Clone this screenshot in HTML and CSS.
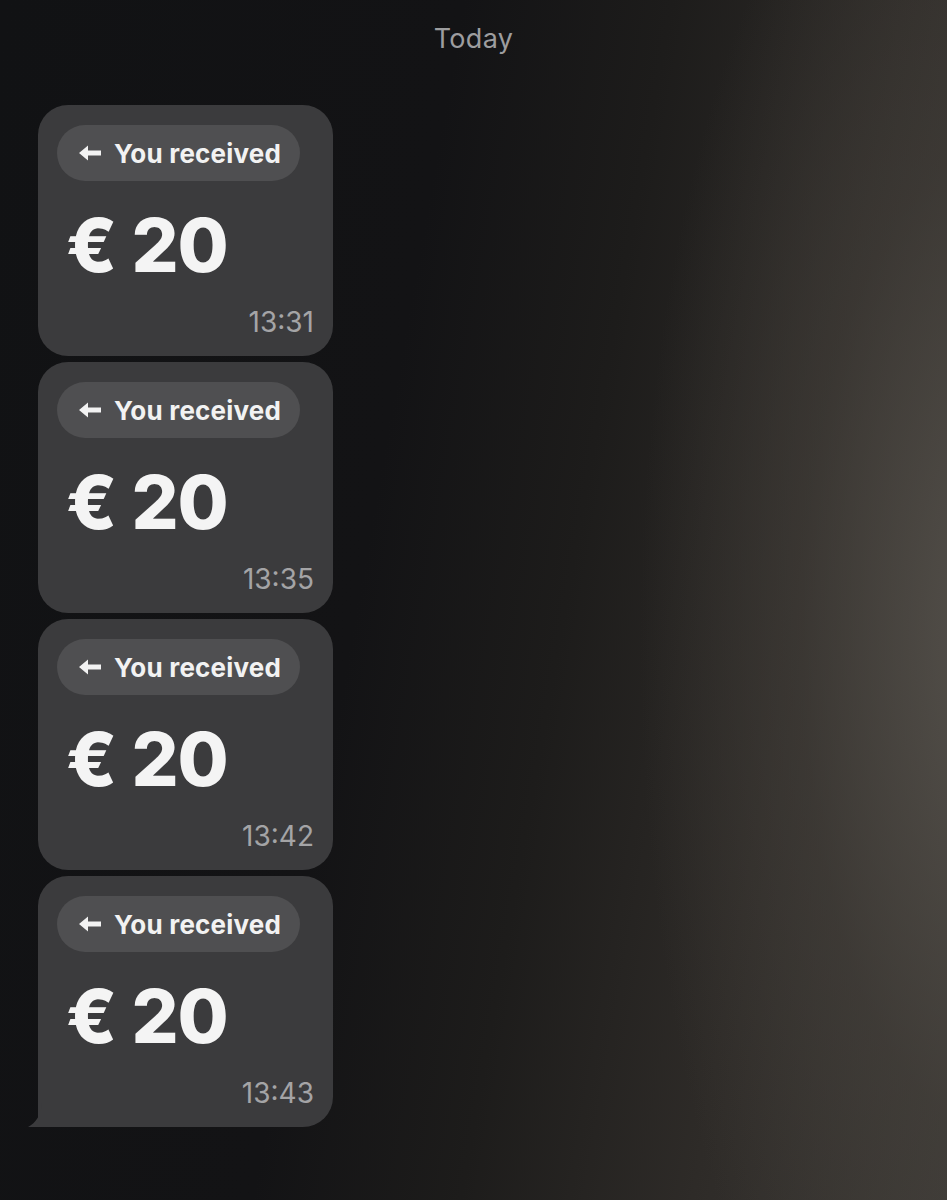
FILE: index.html
```html
<!DOCTYPE html>
<html lang="en">
<head>
    <meta charset="UTF-8">
    <meta name="viewport" content="width=device-width, initial-scale=1.0">
    <title>Chat</title>
    <link rel="stylesheet" href="styles.css">
</head>
<body>
    <div class="screen">
        <div class="day">Today</div>

        <div class="thread">
            <div class="bubble">
                <div class="tag">
                    <svg class="arrow" viewBox="0 0 22 16"><path d="M0 8 L9 0.5 L9 5.5 L22 5.5 L22 10.5 L9 10.5 L9 15.5 Z" fill="#f2f2f2"/></svg>
                    <span>You received</span>
                </div>
                <div class="amount">€ 20</div>
                <div class="time">13:31</div>
            </div>

            <div class="bubble">
                <div class="tag">
                    <svg class="arrow" viewBox="0 0 22 16"><path d="M0 8 L9 0.5 L9 5.5 L22 5.5 L22 10.5 L9 10.5 L9 15.5 Z" fill="#f2f2f2"/></svg>
                    <span>You received</span>
                </div>
                <div class="amount">€ 20</div>
                <div class="time">13:35</div>
            </div>

            <div class="bubble">
                <div class="tag">
                    <svg class="arrow" viewBox="0 0 22 16"><path d="M0 8 L9 0.5 L9 5.5 L22 5.5 L22 10.5 L9 10.5 L9 15.5 Z" fill="#f2f2f2"/></svg>
                    <span>You received</span>
                </div>
                <div class="amount">€ 20</div>
                <div class="time">13:42</div>
            </div>

            <div class="bubble last">
                <div class="tag">
                    <svg class="arrow" viewBox="0 0 22 16"><path d="M0 8 L9 0.5 L9 5.5 L22 5.5 L22 10.5 L9 10.5 L9 15.5 Z" fill="#f2f2f2"/></svg>
                    <span>You received</span>
                </div>
                <div class="amount">€ 20</div>
                <div class="time">13:43</div>
                <!-- tail of the last bubble -->
                <svg class="tail" viewBox="0 0 24 44"><path d="M14 0 L24 0 L24 44 L0 44 C8 40 13 32 14 20 Z" fill="#3b3b3d"/></svg>
            </div>
        </div>
    </div>
</body>
</html>
```

FILE: styles.css
```css
body {
    margin: 0;
    padding: 0;
    font-family: Inter, "Noto Sans", Arial, sans-serif;
    background-color: #121315;
}

.screen {
    min-height: 1200px;
    background:
        radial-gradient(ellipse 360px 900px at 1000px 640px, rgba(88, 84, 78, 0.9), rgba(68, 64, 59, 0.55) 55%, rgba(40, 38, 36, 0) 100%),
        linear-gradient(100deg, #111214 0%, #131315 40%, #1d1c1b 58%, #2e2b28 78%, #3d3a36 100%);
    padding-top: 22px;
    box-sizing: border-box;
}

.day {
    text-align: center;
    font-size: 27px;
    color: #9d9d9f;
    letter-spacing: 0.3px;
    font-weight: 400;
    line-height: 34px;
}

.thread {
    display: flex;
    flex-direction: column;
    gap: 6px;
    padding-left: 38px;
    margin-top: 49px;
}

.bubble {
    position: relative;
    width: 295px;
    height: 251px;
    box-sizing: border-box;
    background-color: #3b3b3d;
    border-radius: 30px;
    padding: 20px 19px 0 19px;
}

.bubble.last {
    border-bottom-left-radius: 0;
}

.tag {
    display: inline-flex;
    align-items: center;
    gap: 13px;
    height: 56px;
    padding: 0 19px 0 22px;
    background-color: #4f4f51;
    border-radius: 28px;
    color: #f2f2f2;
    font-size: 26px;
    font-weight: 700;
    letter-spacing: 0.2px;
}

.arrow {
    width: 22px;
    height: 16px;
}

.amount {
    margin-top: 24px;
    margin-left: 9px;
    font-size: 74px;
    font-weight: 800;
    color: #f4f4f4;
    line-height: 80px;
    letter-spacing: -1px;
}

.time {
    position: absolute;
    right: 19px;
    bottom: 19px;
    font-size: 28px;
    color: #a4a4a6;
    line-height: 30px;
}

.tail {
    position: absolute;
    left: -10px;
    bottom: 0;
    width: 24px;
    height: 44px;
}
```
